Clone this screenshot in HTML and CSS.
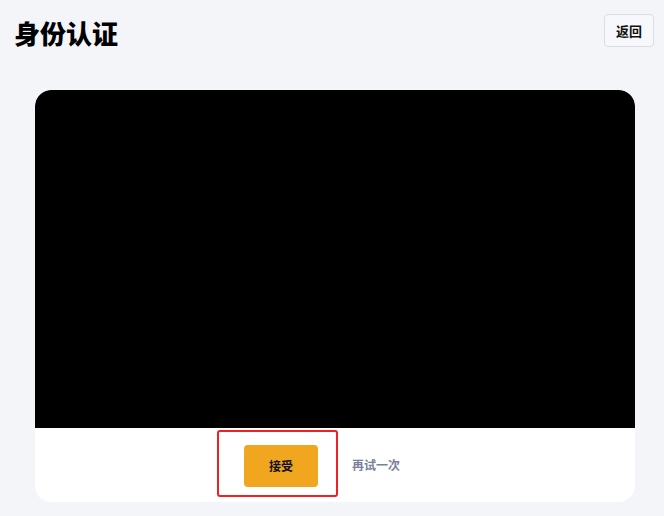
FILE: index.html
```html
<!DOCTYPE html>
<html>
<head>
	<meta charset="utf-8"/>
	<title>身份认证</title>
	<link rel="stylesheet" href="styles.css">
</head>
<body>
<div class="page-head">
	<h1 class="page-title">身份认证</h1>
	<button class="btn-back">返回</button>
</div>

<div class="verify-card">
	<div class="video-box"></div>
	<div class="verify-actions">
		<div class="mark-box">
			<button class="btn-accept">接受</button>
		</div>
		<a class="link-retry">再试一次</a>
	</div>
</div>
</body>
</html>
```

FILE: styles.css
```css
	*{
		box-sizing: border-box;
		font-family: "Noto Sans CJK SC", "Noto Sans", sans-serif;
	}
	body{
		margin: 0;
		background: #f4f5f9;
		width: 664px;
		height: 516px;
		overflow: hidden;
	}

	.page-head{
		display: flex;
		justify-content: space-between;
		align-items: flex-start;
		padding: 14px 10px 0 14px;
		height: 90px;
	}
	.page-title{
		margin: 0;
		font-size: 26px;
		font-weight: 900;
		line-height: 38px;
		color: #000;
	}
	.btn-back{
		width: 50px;
		height: 33px;
		padding: 0;
		background: #f7f8fb;
		border: 1px solid #dcdde2;
		border-radius: 4px;
		font-size: 13px;
		font-weight: 700;
		color: #111;
	}

	.verify-card{
		margin-left: 35px;
		width: 600px;
		background: #fff;
		border-radius: 16px;
		overflow: hidden;
	}
	.video-box{
		height: 338px;
		background: #000;
		border-radius: 16px 16px 0 0;
	}
	.verify-actions{
		display: flex;
		align-items: center;
		height: 74px;
		padding: 1px 0 5px 182px;
	}
	.mark-box{
		border: 2px solid #ee2222;
		border-radius: 3px;
		padding: 13px 18px 8px 25px;
	}
	.btn-accept{
		display: block;
		width: 74px;
		height: 42px;
		padding: 0;
		background: #f0a71f;
		border: none;
		border-radius: 4px;
		font-size: 12px;
		font-weight: 700;
		color: #111;
	}
	.link-retry{
		margin-left: 14px;
		margin-top: 2px;
		font-size: 12px;
		font-weight: 700;
		color: #7b809b;
	}
```
